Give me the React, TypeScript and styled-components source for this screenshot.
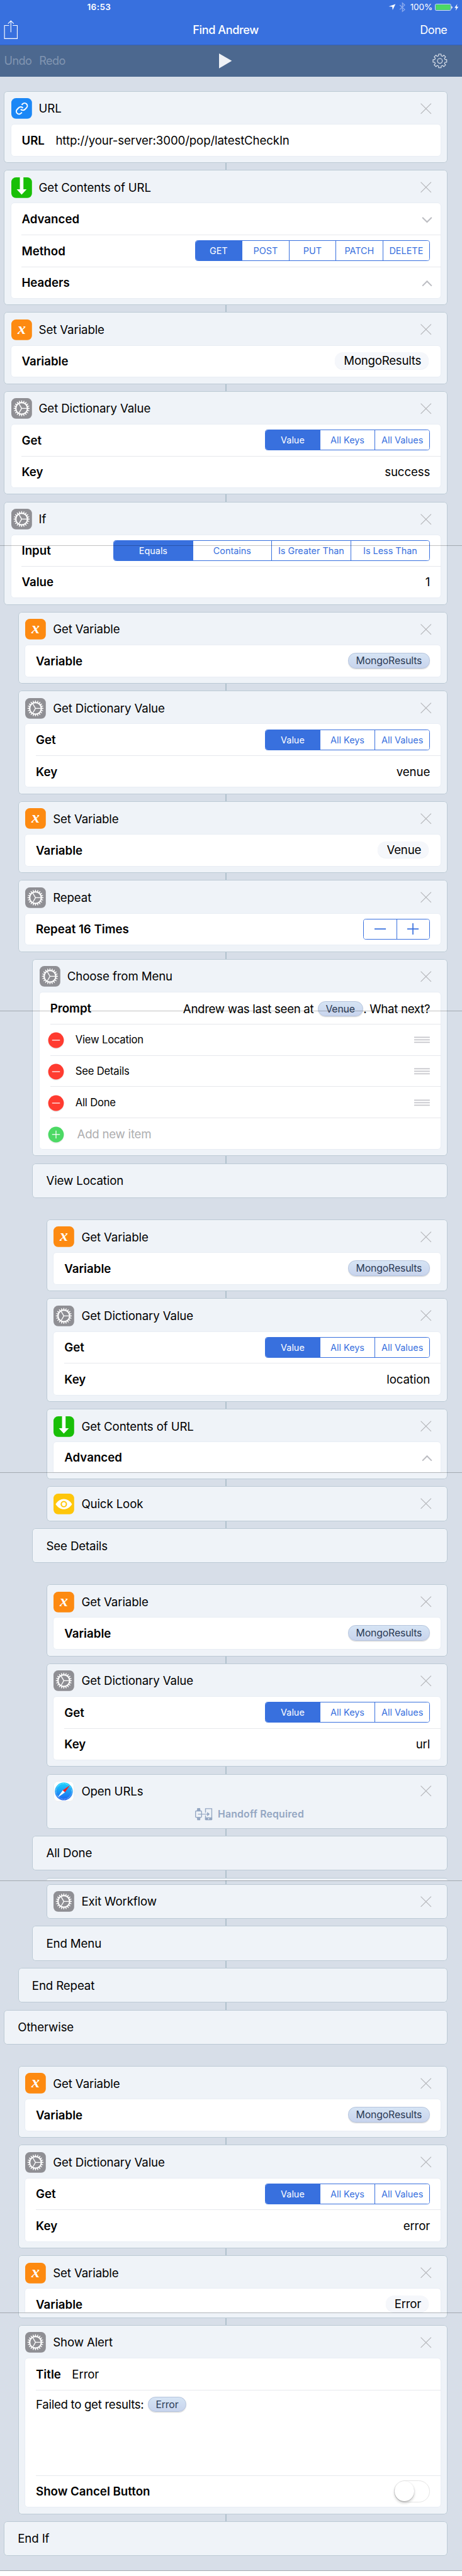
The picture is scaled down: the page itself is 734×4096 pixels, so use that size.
import React from "react";
import styled, { createGlobalStyle, css } from "styled-components";

const SCALE = 0.5652;
const u = (n: number) => `${+(n * SCALE).toFixed(3)}px`;

const blue = "#3870de";

const GlobalStyle = createGlobalStyle`
  * { box-sizing: border-box; }
  body {
    margin: 0;
    background: #fff;
    font-family: Inter, "Liberation Sans", sans-serif;
    color: #000;
    -webkit-font-smoothing: antialiased;
  }
`;

/* ---------- page frame ---------- */

const Page = styled.div`
  position: relative;
  width: 100%;
  height: ${u(7232)};
  background: #d7dee8;
  overflow: hidden;
  font-size: ${u(33)};
  letter-spacing: -0.006em;
  line-height: 1.2;
  white-space: nowrap;
`;

const Seam = styled.div<{ $top: number }>`
  position: absolute;
  left: 0;
  right: 0;
  top: ${(p) => u(p.$top)};
  height: 1px;
  background: rgba(0, 0, 0, 0.24);
`;

const StatusBar = styled.div`
  display: grid;
  grid-template-columns: 1fr auto;
  align-items: center;
  height: ${u(41)};
  padding: 0 ${u(9)} 0 ${u(245)};
  color: #fff;
  font-size: ${u(24)};
`;

const Clock = styled.span`
  font-weight: 600;
  letter-spacing: 0.03em;
`;

const StatusIcons = styled.div`
  display: flex;
  align-items: center;
`;

const Percent = styled.span`
  margin: 0 ${u(7)} 0 ${u(14)};
  letter-spacing: -0.01em;
`;

const Header = styled.header`
  height: ${u(128)};
  background: ${blue};
  border-bottom: 1px solid #335fb8;
`;

const NavBar = styled.div`
  display: grid;
  grid-template-columns: 1fr auto 1fr;
  align-items: center;
  height: ${u(86)};
  padding: 0 ${u(42)} 0 ${u(11)};
  color: #fff;
  font-size: ${u(32)};
  letter-spacing: -0.03em;
`;

const NavTitle = styled.span`
  padding-left: ${u(1)};
  font-weight: 500;
  letter-spacing: -0.022em;
`;

const NavAction = styled.span`
  justify-self: end;
`;

const Toolbar = styled.div`
  display: grid;
  grid-template-columns: 1fr auto 1fr;
  align-items: center;
  height: ${u(88)};
  padding: 0 ${u(42)} 0 ${u(11.5)};
  background: #4c688f;
  font-size: ${u(32)};
  letter-spacing: -0.03em;
`;

const History = styled.div`
  display: flex;
  gap: ${u(21)};
  color: #8195b1;
`;

const ToolSlot = styled.div`
  display: flex;
  justify-self: end;
`;

const Steps = styled.main`
  display: flex;
  flex-direction: column;
  padding: ${u(40.4)} ${u(40)} 0 ${u(11)};
`;

/* ---------- step cards ---------- */

const Connector = styled.div<{ $h?: number; $hidden?: boolean }>`
  height: ${(p) => u(p.$h ?? 20)};
  width: ${u(4)};
  flex: none;
  align-self: center;
  background: ${(p) => (p.$hidden ? "transparent" : "#b1c2ce")};
`;

const cardSurface = css`
  background: #eff3f8;
  box-shadow: inset 0 0 0 1px #bccad5;
  border-radius: ${u(10)};
  flex: none;
`;

const CardBox = styled.section<{ $level: number; $bottom: number }>`
  ${cardSurface}
  margin-left: ${(p) => u(p.$level * 40)};
  padding: 0 ${u(20)} ${(p) => u(p.$bottom)};
`;

const CardSliver = styled.div<{ $level: number }>`
  flex: none;
  margin-left: ${(p) => u(p.$level * 40)};
  height: ${u(8)};
  background: #eff3f8;
  border-top: 1px solid #bccad5;
  border-radius: ${u(10)} ${u(10)} 0 0;
`;

const CardHeader = styled.div<{ $bare?: boolean }>`
  display: flex;
  align-items: center;
  height: ${(p) => u(p.$bare ? 98 : 94)};
  padding: ${(p) => (p.$bare ? 0 : u(4))} ${u(25)} 0 0;
`;

const CardTitle = styled.span`
  flex: 1;
  margin-left: ${u(20)};
`;

const Marker = styled.div<{ $level: number }>`
  ${cardSurface}
  display: flex;
  align-items: center;
  margin-left: ${(p) => u(p.$level * 40)};
  height: ${u(98)};
  padding-left: ${u(39)};
`;

const Fields = styled.div<{ $cut?: boolean }>`
  display: flex;
  flex-direction: column;
  background: #fff;
  border-radius: ${(p) => (p.$cut ? `${u(8)} ${u(8)} 0 0` : u(8))};
  box-shadow: 0 0 0 0.5px #e1e7f0;
`;

const Row = styled.div<{ $h?: number; $rule?: boolean }>`
  display: flex;
  flex: none;
  align-items: center;
  height: ${(p) => u((p.$h ?? 88) + (p.$rule ? 1 : 0))};
  margin-left: ${u(30)};
  padding-right: ${u(30)};
  border-top: ${(p) => (p.$rule ? "1px solid #e6e8ec" : "none")};
`;

const Label = styled.span`
  font-weight: 600;
  letter-spacing: 0.001em;
`;

const Value = styled.span`
  margin-left: auto;
`;

const InlineValue = styled.span`
  margin-left: ${u(31)};
`;

const Pill = styled.span`
  display: inline-flex;
  align-items: center;
  height: ${u(44)};
  padding: 0 ${u(21)};
  border: 1px solid #b5c4dd;
  border-radius: ${u(21)};
  background: linear-gradient(#d6e4f4, #c8d4ed);
  box-shadow: 0 ${u(2)} ${u(2)} rgba(0, 0, 0, 0.14);
  color: #2b3a54;
  font-size: ${u(28)};
  letter-spacing: -0.01em;
`;

const GhostPill = styled.span`
  display: inline-flex;
  align-items: center;
  height: ${u(47)};
  margin: 0 ${u(3)} ${u(3)} auto;
  padding: 0 ${u(22)} 0 ${u(25)};
  border-radius: ${u(23)};
  background: #f5f7fb;
  box-shadow: 0 1px 1px rgba(200, 208, 225, 0.3);
  letter-spacing: -0.013em;
`;

const PillSlot = styled.div`
  display: flex;
  margin: 0 0 ${u(2)} auto;
`;

const Sentence = styled.div<{ $push?: boolean }>`
  display: flex;
  align-items: center;
  margin-left: ${(p) => (p.$push ? "auto" : 0)};
  padding-top: ${(p) => (p.$push ? u(5) : 0)};
  letter-spacing: -0.016em;

  ${Pill} {
    margin: 0 ${u(1)} 0 ${u(11)};
    height: ${u(43)};
  }
`;

const SegmentBox = styled.div<{ $w: number }>`
  display: flex;
  width: ${(p) => u(p.$w)};
  height: ${u(58)};
  margin-left: auto;
  border: 1px solid ${blue};
  border-radius: ${u(8)};
  overflow: hidden;
`;

const Segment = styled.div<{ $on?: boolean; $first?: boolean }>`
  flex: 1 1 0;
  display: flex;
  align-items: center;
  justify-content: center;
  background: ${(p) => (p.$on ? blue : "#fff")};
  border-left: ${(p) => (p.$first ? "none" : `1px solid ${blue}`)};
  color: ${(p) => (p.$on ? "#fff" : blue)};
  font-size: ${u(25.5)};
  letter-spacing: 0;
`;

const ItemRow = styled(Row)`
  & > svg:first-child {
    margin: ${u(3)} ${u(32)} 0 ${u(-7)};
  }
`;

const ItemText = styled.span`
  flex: 1;
  font-size: ${u(29.5)};
  letter-spacing: -0.013em;
`;

const NewItem = styled.span`
  margin-left: ${u(5)};
  color: #aeaeb0;
  letter-spacing: -0.013em;
`;

const MessageArea = styled.div`
  flex: none;
  height: ${u(241)};
  margin-left: ${u(30)};
  padding-top: ${u(18)};
  border-top: 1px solid #e6e8ec;
`;

const Track = styled.div`
  width: ${u(102)};
  height: ${u(62)};
  margin-left: auto;
  border: ${u(3)} solid #e5e5e5;
  border-radius: ${u(31)};
`;

const Knob = styled.div`
  width: ${u(56)};
  height: ${u(56)};
  border-radius: 50%;
  background: #fff;
  box-shadow: 0 ${u(5)} ${u(8)} rgba(0, 0, 0, 0.2), 0 ${u(1)} ${u(2)} rgba(0, 0, 0, 0.3);
`;

const Handoff = styled.div`
  display: flex;
  align-items: center;
  justify-content: center;
  gap: ${u(15)};
  height: ${u(40)};
  padding-left: ${u(14)};
  color: #94a6c2;
  font-size: ${u(28)};
  font-weight: 600;
  letter-spacing: 0.012em;
`;

const ChevronSlot = styled.div`
  margin: ${u(4)} ${u(-6)} 0 auto;
`;

/* ---------- drawings ---------- */

const Drawing = styled.svg`
  flex: none;
  display: block;
  overflow: visible;
`;

const Svg = ({ w, h, children }: { w: number; h: number; children: React.ReactNode }) => (
  <Drawing width={w * SCALE} height={h * SCALE} viewBox={`0 0 ${w} ${h}`} fill="none">
    {children}
  </Drawing>
);

const polar = (c: number, r: number, deg: number) => {
  const a = (deg * Math.PI) / 180;
  return `${(c + r * Math.cos(a)).toFixed(2)} ${(c + r * Math.sin(a)).toFixed(2)}`;
};

const cog = (c: number, teeth: number, outer: number, inner: number, tip: number, base: number) => {
  const pts: string[] = [];
  for (let i = 0; i < teeth; i++) {
    const a = (i * 360) / teeth;
    pts.push(polar(c, inner, a - base), polar(c, outer, a - tip), polar(c, outer, a + tip), polar(c, inner, a + base));
  }
  return `M${pts.join("L")}Z`;
};

const ShareIcon = () => (
  <Svg w={40} h={54}>
    <path d="M15 15H2V52H38V15H25M20 34V2M12 10L20 2L28 10" stroke="#fff" strokeWidth="2" />
  </Svg>
);

const PlayIcon = () => (
  <Svg w={36} h={42}>
    <path d="M0 0L36 21L0 42Z" fill="#eef1f6" />
  </Svg>
);

const SettingsIcon = () => (
  <Svg w={42} h={42}>
    <path d={cog(21, 8, 19.6, 15, 10.5, 14)} stroke="#e8ecf3" strokeWidth="1.9" strokeLinejoin="round" />
    <circle cx="21" cy="21" r="6.8" stroke="#e8ecf3" strokeWidth="1.9" />
  </Svg>
);

const StatusGlyphs = () => (
  <Svg w={48} h={30}>
    <path d="M1 13L20 6L12 23L11 13.500Z" fill="#fff" />
    <path d="M32 9L46 21.5L39.5 27V3L46 9L32 21.5" stroke="#8fadee" strokeWidth="2.2" />
  </Svg>
);

const BatteryIcon = () => (
  <Svg w={67} h={20}>
    <rect x="0.8" y="1" width="44" height="17.6" rx="3" stroke="#fff" strokeWidth="1.4" />
    <rect x="2.2" y="2.4" width="41.2" height="14.8" rx="2" fill="#4cd964" />
    <path d="M46.5 6.5C50 7 50 13 46.5 13.5Z" fill="#fff" />
    <path d="M63 0.5L55 11.5H60L58 19.5L66 8.5H61Z" fill="#fff" />
  </Svg>
);

const CloseIcon = () => (
  <Svg w={31} h={31}>
    <path d="M1 1L30 30M30 1L1 30" stroke="#b3b4b8" strokeWidth="2" />
  </Svg>
);

const Chevron = ({ up }: { up?: boolean }) => (
  <ChevronSlot>
    <Svg w={30} h={20}>
      <path d={up ? "M2 17L15 4L28 17" : "M2 3L15 16L28 3"} stroke="#bcbdc2" strokeWidth="3.6" />
    </Svg>
  </ChevronSlot>
);

const Minus = () => (
  <Svg w={32} h={32}>
    <path d="M0 16H32" stroke={blue} strokeWidth="3" />
  </Svg>
);

const Plus = () => (
  <Svg w={32} h={32}>
    <path d="M0 16H32M16 0V32" stroke={blue} strokeWidth="3" />
  </Svg>
);

const RoundButton = ({ add }: { add?: boolean }) => (
  <Svg w={46} h={46}>
    <circle cx="23" cy="26" r="22" fill="#000" opacity="0.07" />
    <circle cx="23" cy="23" r="22" fill={add ? "#4cd964" : "#ff3b30"} />
    <path d={add ? "M12 23H34M23 12V34" : "M12 23H34"} stroke="#fff" strokeWidth="2.2" />
  </Svg>
);

const Grip = () => (
  <Svg w={44} h={19}>
    <path d="M0 2.5H44M0 9.5H44M0 16.5H44" stroke="#c6c6cb" strokeWidth="3" />
  </Svg>
);

const HandoffIcon = () => (
  <Svg w={48} h={34}>
    <rect x="1.2" y="8" width="17" height="18" rx="2" stroke="#94a6c2" strokeWidth="2.4" />
    <path d="M5 7L6 0H14L15 7ZM5 27L6 34H14L15 27Z" fill="#94a6c2" />
    <path d="M29.2 13V1.5H46.8V32H29.2V21" stroke="#94a6c2" strokeWidth="2.4" />
    <path d="M28 26H48V32Q48 34 46 34H30Q28 34 28 32Z" fill="#94a6c2" />
    <circle cx="38" cy="30" r="1.8" fill="#eff3f8" />
    <path d="M8 17H36" stroke="#94a6c2" strokeWidth="2" />
    <path d="M34 11L41 17L34 23Z" fill="#94a6c2" />
  </Svg>
);

type Kind = "link" | "down" | "var" | "gear" | "eye" | "safari";

const tileColor: Record<Kind, string> = {
  link: "#1b87f6",
  down: "#19bf07",
  var: "#fd8a11",
  gear: "#8f8f94",
  eye: "#fec60b",
  safari: "#ffffff",
};

const StepIcon = ({ kind }: { kind: Kind }) => (
  <Svg w={58} h={58}>
    <rect width="58" height="58" rx="13" fill={tileColor[kind]} />
    {kind === "link" && (
      <g transform="translate(29.5 29.5) scale(1.55) translate(-12 -12)" stroke="#fff" strokeWidth="2.3">
        <path d="M10 13a5 5 0 0 0 7.54.54l3-3a5 5 0 0 0-7.07-7.07l-1.72 1.71" />
        <path d="M14 11a5 5 0 0 0-7.54-.54l-3 3a5 5 0 0 0 7.07 7.07l1.71-1.71" />
      </g>
    )}
    {kind === "down" && <path d="M24 0H34V33.7H43L29 48.5L15 33.7H24Z" fill="#fff" />}
    {kind === "var" && (
      <text
        x="29"
        y="40"
        textAnchor="middle"
        fontFamily="Liberation Serif, serif"
        fontStyle="italic"
        fontWeight="700"
        fontSize="46"
        letterSpacing="0"
        fill="#fff"
      >
        x
      </text>
    )}
    {kind === "gear" && (
      <>
        <path
          d={`${cog(29, 20, 22.5, 18, 2.6, 5)}M29 14.5A14.5 14.5 0 1 0 29 43.5A14.5 14.5 0 1 0 29 14.5Z`}
          fill="#fff"
          fillRule="evenodd"
        />
        <path d={`M29 29H44M29 29L${polar(29, 15, 120)}M29 29L${polar(29, 15, 240)}`} stroke="#fff" strokeWidth="2.4" />
      </>
    )}
    {kind === "eye" && (
      <>
        <path d="M6 29.5C18 10.5 40 10.5 52 29.5C40 48.5 18 48.5 6 29.5Z" fill="#fff" />
        <circle cx="29" cy="29.5" r="7.3" stroke="#fec60b" strokeWidth="3.6" />
      </>
    )}
    {kind === "safari" && (
      <>
        <defs>
          <linearGradient id="compass" x1="0" y1="0" x2="0" y2="1">
            <stop offset="0" stopColor="#1ad5fd" />
            <stop offset="1" stopColor="#1e62ef" />
          </linearGradient>
        </defs>
        <rect x="0.7" y="0.7" width="56.6" height="56.6" rx="12.5" stroke="#e2e3e6" strokeWidth="1.2" />
        <circle cx="29" cy="29" r="25" fill="url(#compass)" />
        <circle cx="29" cy="29" r="22" stroke="#fff" strokeWidth="2.5" strokeDasharray="0.7 1.6" opacity="0.75" />
        <path d="M46 12L32 32L26 26Z" fill="#fb1e1e" />
        <path d="M12 46L26 26L32 32Z" fill="#fff" />
      </>
    )}
  </Svg>
);

/* ---------- composed parts ---------- */

interface CardProps {
  icon: Kind;
  title: string;
  level?: number;
  bottom?: number;
  cut?: boolean;
  children?: React.ReactNode;
}

const Card = ({ icon, title, level = 0, bottom = 20, cut, children }: CardProps) => (
  <CardBox $level={level} $bottom={children ? bottom : 0}>
    <CardHeader $bare={!children}>
      <StepIcon kind={icon} />
      <CardTitle>{title}</CardTitle>
      <CloseIcon />
    </CardHeader>
    {children && <Fields $cut={cut}>{children}</Fields>}
  </CardBox>
);

const Segments = ({ options, width }: { options: string[]; width: number }) => (
  <SegmentBox $w={width}>
    {options.map((o, i) => (
      <Segment key={o} $on={i === 0} $first={i === 0}>
        {o}
      </Segment>
    ))}
  </SegmentBox>
);

const GetVariable = ({ level }: { level: number }) => (
  <Card icon="var" title="Get Variable" level={level}>
    <Row>
      <Label>Variable</Label>
      <PillSlot>
        <Pill>MongoResults</Pill>
      </PillSlot>
    </Row>
  </Card>
);

const VariableRow = styled(Row)<{ $cut?: boolean }>`
  padding-top: ${(p) => (p.$cut ? u(21) : 0)};
`;

const SetVariable = ({ level = 0, name, cut }: { level?: number; name: string; cut?: boolean }) => (
  <Card icon="var" title="Set Variable" level={level} bottom={cut ? 16 : 20} cut={cut}>
    <VariableRow $h={cut ? 66 : 88} $cut={cut}>
      <Label>Variable</Label>
      <GhostPill>{name}</GhostPill>
    </VariableRow>
  </Card>
);

const GetDictionaryValue = ({ level = 0, field }: { level?: number; field: string }) => (
  <Card icon="gear" title="Get Dictionary Value" level={level}>
    <Row>
      <Label>Get</Label>
      <Segments width={464} options={["Value", "All Keys", "All Values"]} />
    </Row>
    <Row $rule>
      <Label>Key</Label>
      <Value>{field}</Value>
    </Row>
  </Card>
);

const MenuItem = ({ text }: { text: string }) => (
  <ItemRow $h={87.2} $rule>
    <RoundButton />
    <ItemText>{text}</ItemText>
    <Grip />
  </ItemRow>
);

export default function App() {
  return (
    <Page>
      <GlobalStyle />
      <Header>
        <StatusBar>
          <Clock>16:53</Clock>
          <StatusIcons>
            <StatusGlyphs />
            <Percent>100%</Percent>
            <BatteryIcon />
          </StatusIcons>
        </StatusBar>
        <NavBar>
          <ShareIcon />
          <NavTitle>Find Andrew</NavTitle>
          <NavAction>Done</NavAction>
        </NavBar>
      </Header>
      <Toolbar>
        <History>
          <span>Undo</span>
          <span>Redo</span>
        </History>
        <PlayIcon />
        <ToolSlot>
          <SettingsIcon />
        </ToolSlot>
      </Toolbar>

      <Steps>
        <Card icon="link" title="URL">
          <Row>
            <Label>URL</Label>
            <InlineValue>http://your-server:3000/pop/latestCheckIn</InlineValue>
          </Row>
        </Card>
        <Connector />
        <Card icon="down" title="Get Contents of URL">
          <Row>
            <Label>Advanced</Label>
            <Chevron />
          </Row>
          <Row $rule>
            <Label>Method</Label>
            <Segments width={661} options={["GET", "POST", "PUT", "PATCH", "DELETE"]} />
          </Row>
          <Row $rule>
            <Label>Headers</Label>
            <Chevron up />
          </Row>
        </Card>
        <Connector />
        <SetVariable name="MongoResults" />
        <Connector />
        <GetDictionaryValue field="success" />
        <Connector />
        <Card icon="gear" title="If">
          <Row $h={87}>
            <Label>Input</Label>
            <Segments width={890} options={["Equals", "Contains", "Is Greater Than", "Is Less Than"]} />
          </Row>
          <Row $rule>
            <Label>Value</Label>
            <Value>1</Value>
          </Row>
        </Card>
        <Connector $hidden />
        <GetVariable level={1} />
        <Connector />
        <GetDictionaryValue level={1} field="venue" />
        <Connector />
        <SetVariable level={1} name="Venue" />
        <Connector />
        <Card icon="gear" title="Repeat" level={1}>
          <Row>
            <Label>Repeat 16 Times</Label>
            <SegmentBox $w={187}>
              <Segment $first>
                <Minus />
              </Segment>
              <Segment>
                <Plus />
              </Segment>
            </SegmentBox>
          </Row>
        </Card>
        <Connector />
        <Card icon="gear" title="Choose from Menu" level={2}>
          <Row>
            <Label>Prompt</Label>
            <Sentence $push>
              Andrew was last seen at
              <Pill>Venue</Pill>. What next?
            </Sentence>
          </Row>
          <MenuItem text="View Location" />
          <MenuItem text="See Details" />
          <MenuItem text="All Done" />
          <ItemRow $h={87.2} $rule>
            <RoundButton add />
            <NewItem>Add new item</NewItem>
          </ItemRow>
        </Card>
        <Connector />
        <Marker $level={2}>View Location</Marker>
        <Connector $h={60} $hidden />
        <GetVariable level={3} />
        <Connector />
        <GetDictionaryValue level={3} field="location" />
        <Connector />
        <Card icon="down" title="Get Contents of URL" level={3} cut>
          <Row $h={84}>
            <Label>Advanced</Label>
            <Chevron up />
          </Row>
        </Card>
        <Connector />
        <Card icon="eye" title="Quick Look" level={3} />
        <Connector />
        <Marker $level={2}>See Details</Marker>
        <Connector $h={60} $hidden />
        <GetVariable level={3} />
        <Connector />
        <GetDictionaryValue level={3} field="url" />
        <Connector />
        <CardBox $level={3} $bottom={20}>
          <CardHeader>
            <StepIcon kind="safari" />
            <CardTitle>Open URLs</CardTitle>
            <CloseIcon />
          </CardHeader>
          <Handoff>
            <HandoffIcon />
            Handoff Required
          </Handoff>
        </CardBox>
        <Connector />
        <Marker $level={2}>All Done</Marker>
        <Connector />
        <CardSliver $level={3} />
        <Connector $h={10} />
        <Card icon="gear" title="Exit Workflow" level={3} />
        <Connector />
        <Marker $level={2}>End Menu</Marker>
        <Connector />
        <Marker $level={1}>End Repeat</Marker>
        <Connector />
        <Marker $level={0}>Otherwise</Marker>
        <Connector $h={60} $hidden />
        <GetVariable level={1} />
        <Connector />
        <GetDictionaryValue level={1} field="error" />
        <Connector />
        <SetVariable level={1} name="Error" cut />
        <Connector />
        <Card icon="gear" title="Show Alert" level={1}>
          <Row>
            <Label>Title</Label>
            <InlineValue>Error</InlineValue>
          </Row>
          <MessageArea>
            <Sentence>
              Failed to get results:
              <Pill>Error</Pill>
            </Sentence>
          </MessageArea>
          <Row $rule>
            <Label>Show Cancel Button</Label>
            <Track>
              <Knob />
            </Track>
          </Row>
        </Card>
        <Connector />
        <Marker $level={0}>End If</Marker>
      </Steps>

      <Seam $top={1534.5} />
      <Seam $top={2844} />
      <Seam $top={4142.5} />
      <Seam $top={5290} />
      <Seam $top={6506} />
      <Seam $top={7230.3} />
    </Page>
  );
}
